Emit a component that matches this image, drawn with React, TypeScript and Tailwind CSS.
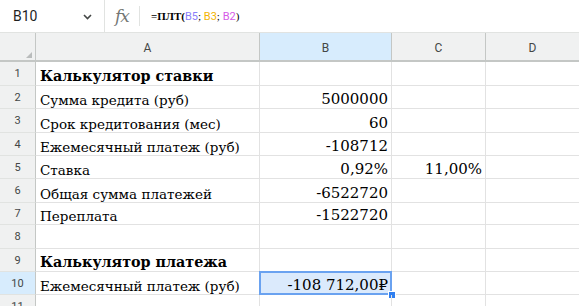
import React from "react";

const serif = "font-['DejaVu_Serif',serif]";
const sans = "font-['Roboto','Liberation_Sans',sans-serif]";

type Row = {
  n: number;
  h: string;
  a?: string;
  b?: string;
  c?: string;
  bold?: boolean;
};

const rows: Row[] = [
  { n: 1, h: "h-[24px]", a: "Калькулятор ставки", bold: true },
  { n: 2, h: "h-[23px]", a: "Сумма кредита (руб)", b: "5000000" },
  { n: 3, h: "h-[24px]", a: "Срок кредитования (мес)", b: "60" },
  { n: 4, h: "h-[23px]", a: "Ежемесячный платеж (руб)", b: "-108712" },
  { n: 5, h: "h-[23px]", a: "Ставка", b: "0,92%", c: "11,00%" },
  { n: 6, h: "h-[24px]", a: "Общая сумма платежей", b: "-6522720" },
  { n: 7, h: "h-[22px]", a: "Переплата", b: "-1522720" },
  { n: 8, h: "h-[24px]" },
  { n: 9, h: "h-[23px]", a: "Калькулятор платежа", bold: true },
  { n: 10, h: "h-[23px]", a: "Ежемесячный платеж (руб)", b: "-108 712,00₽" },
  { n: 11, h: "h-[23px]" },
];

export default function App() {
  return (
    <div className="w-[579px] h-[306px] overflow-hidden bg-white text-[#1f1f1f]">
      {/* formula bar */}
      <div className="flex h-[33px] items-center border-b border-[#e1e3e1]">
        <div className={`flex h-full w-[105px] items-center justify-between border-r border-[#e1e3e1] pl-[13px] pr-[12px] ${sans} text-[14px]`}>
          <span>B10</span>
          <svg width="9" height="6" viewBox="0 0 9 6" className="mt-[1px]">
            <path d="M1 1l3.5 3.5L8 1" fill="none" stroke="#444746" strokeWidth="1.6" />
          </svg>
        </div>
        <div className="flex h-full items-center pl-[10px] pr-[10px]">
          <span className={`${serif} italic text-[17px] leading-none text-[#747775] tracking-[-1px]`}>fx</span>
        </div>
        <div className="h-[20px] w-px bg-[#e1e3e1]" />
        <div className="ml-[11px] flex items-baseline text-[11px] leading-none text-black">
          <span className="font-['Liberation_Serif',serif] font-bold">=ПЛТ(</span>
          <span className={`${sans} text-[11px] text-[#8b80f9]`}>B5</span>
          <span className="font-['Liberation_Serif',serif]">;&nbsp;</span>
          <span className={`${sans} text-[11px] text-[#f2b400]`}>B3</span>
          <span className="font-['Liberation_Serif',serif]">;&nbsp;</span>
          <span className={`${sans} text-[11px] text-[#d65ae8]`}>B2</span>
          <span className="font-['Liberation_Serif',serif]">)</span>
        </div>
      </div>

      {/* column headers */}
      <div className={`flex h-[29px] border-b-2 border-[#c4c7c5] bg-[#f0f1f1] ${sans} text-[12px] text-[#444746]`}>
        <div className="relative w-[36px] border-r border-[#c4c7c5]">
          <div className="absolute bottom-[2px] right-[3px] h-0 w-0 border-b-[6px] border-l-[6px] border-b-[#b9bcbc] border-l-transparent" />
        </div>
        <div className="flex w-[224px] items-center justify-center border-r border-[#c4c7c5] pt-[3px]">A</div>
        <div className="flex w-[132px] items-center justify-center border-r border-[#c4c7c5] bg-[#d7ecfd] pt-[3px]">B</div>
        <div className="flex w-[94px] items-center justify-center border-r border-[#c4c7c5] pt-[3px]">C</div>
        <div className="flex flex-1 items-center justify-center pt-[3px]">D</div>
      </div>

      {/* rows */}
      {rows.map((r) => {
        const sel = r.n === 10;
        return (
          <div key={r.n} className={`flex ${r.h}`}>
            <div
              className={`flex w-[36px] items-center justify-center border-r border-b border-r-[#c4c7c5] border-b-[#e1e3e1] ${sans} text-[11px] text-[#444746] pt-[2px] ${
                sel ? "bg-[#d7ecfd]" : "bg-[#f0f1f1]"
              }`}
            >
              {r.n}
            </div>
            <div
              className={`flex w-[224px] items-end border-r border-b border-[#e2e2e2] pl-[4px] ${serif} leading-none text-black ${
                r.bold ? "font-bold text-[14.3px] pb-[2px]" : "text-[13.5px] pb-[1px]"
              }`}
            >
              {r.a}
            </div>
            <div
              className={`relative flex w-[132px] items-end justify-end border-r border-b pr-[3px] pb-[1px] ${serif} text-[15px] leading-none text-black ${
                sel ? "border-[#e2e2e2] bg-[#dbeafc]" : "border-[#e2e2e2]"
              }`}
            >
              {r.b}
              {sel && (
                <>
                  <div className="absolute -left-px -top-px -right-px -bottom-px border-2 border-[#6aa2f0]" />
                  <div className="absolute -bottom-[4px] -right-[4px] h-[6px] w-[6px] bg-[#2f7ff0] ring-1 ring-white" />
                </>
              )}
            </div>
            <div className={`flex w-[94px] items-end justify-end border-r border-b border-[#e2e2e2] pr-[3px] pb-[1px] ${serif} text-[15px] leading-none text-black`}>
              {r.c}
            </div>
            <div className="flex-1 border-b border-[#e2e2e2]" />
          </div>
        );
      })}
    </div>
  );
}
